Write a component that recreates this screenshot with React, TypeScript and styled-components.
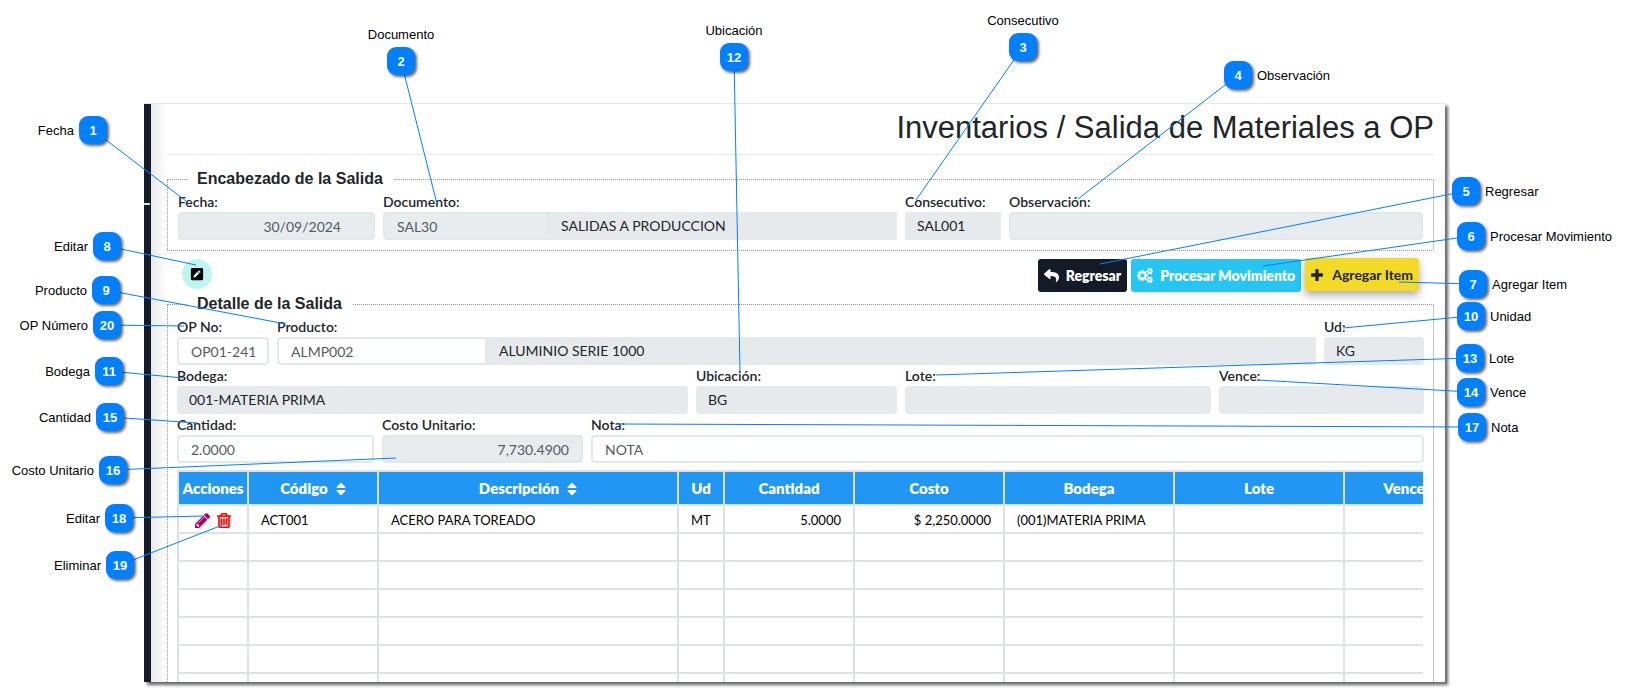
import React from "react";
import styled, { createGlobalStyle, css } from "styled-components";
import { FaPenSquare, FaReply, FaSort } from "react-icons/fa";

const GlobalStyle = createGlobalStyle`
  *, *::before, *::after { box-sizing: border-box; }
  body {
    margin: 0;
    background: #fff;
    color: #212529;
    font-family: Lato, "Liberation Sans", sans-serif;
    font-size: 14px;
  }
  button, input { font: inherit; }
`;

const Figure = styled.main`
  position: relative;
  height: 100vh;
  overflow: hidden;
  display: flex;
  padding: 103px 182px 9px 144px;
`;

const Screen = styled.section`
  flex: 1;
  min-width: 0;
  display: flex;
  overflow: hidden;
  border-top: 1px solid #e6e9ea;
  background: #fff;
  box-shadow: 3px 3px 3px rgba(0, 0, 0, 0.6);
`;

const Sidebar = styled.div`
  flex: none;
  width: 7px;
  padding-top: 99px;
  background: #141b29;
`;

const SidebarMark = styled.div`
  height: 2px;
  width: 6px;
  background: #dfe3e8;
`;

const Content = styled.div`
  flex: 1;
  min-width: 0;
  padding: 0 11px 0 16px;
  background: linear-gradient(to right, #e9e9e9, #fff 16px);
`;

const Title = styled.h1`
  margin: 0 0 24px;
  height: 51px;
  padding-top: 7px;
  border-bottom: 1px solid #e6eaec;
  font: 400 31px/34px "Liberation Sans", Arial, sans-serif;
  text-align: right;
  white-space: nowrap;
`;

const Group = styled.fieldset<{ $tall?: boolean }>`
  min-width: 0;
  margin: 0;
  border: 0;
  padding: 0;
  height: ${(p) => (p.$tall ? "480px" : "auto")};
`;

const GroupHead = styled.legend`
  display: flex;
  align-items: center;
  width: 100%;
  height: 0;
  padding: 0;
  font: 700 16px/18px "Liberation Sans", Arial, sans-serif;
  white-space: nowrap;

  &::before {
    content: "";
    width: 20px;
    border-top: 1px dotted #999;
  }
  &::after {
    content: "";
    flex: 1;
    border-top: 1px dotted #999;
  }
`;

const GroupTitle = styled.span`
  padding: 0 11px 0 10px;
`;

const GroupBody = styled.div<{ $inset: number; $tall?: boolean }>`
  padding: 13px ${(p) => p.$inset}px 9px;
  height: ${(p) => (p.$tall ? "100%" : "auto")};
  border: 1px dotted #999;
  border-top: 0;
  border-right: 1px solid #c4c6c8;
`;

const Row = styled.div<{ $cols: string }>`
  display: grid;
  grid-template-columns: ${(p) => p.$cols};
  gap: 8px;
  margin-bottom: 1px;
`;

const Field = styled.div`
  min-width: 0;
  display: flex;
  flex-direction: column;
`;

const Caption = styled.label`
  height: 20px;
  font-size: 14px;
  line-height: 20px;
  font-weight: 600;
  color: #212529;
  white-space: nowrap;
`;

const Pair = styled.div<{ $cols: string }>`
  display: grid;
  grid-template-columns: ${(p) => p.$cols};
`;

const control = css`
  width: 100%;
  min-width: 0;
  height: 28px;
  margin: 0;
  font-size: 14px;
  line-height: 20px;
`;

const TextBox = styled.input<{ $right?: number; $joined?: boolean }>`
  ${control}
  padding: 0 ${(p) => p.$right ?? 12}px 0 12px;
  border: 2px solid #e3e8e8;
  border-radius: ${(p) => (p.$joined ? "4px 0 0 4px" : "4px")};
  background: #fff;
  color: #545b62;
  text-align: ${(p) => (p.$right ? "right" : "left")};

  &:read-only { background: #e8ecef; }
`;

const ReadOut = styled.output<{ $square?: boolean }>`
  ${control}
  display: block;
  padding: 4px 12px;
  border-radius: ${(p) => (p.$square ? "0" : "4px")};
  background: #e7eaed;
  color: #212529;
  white-space: nowrap;
`;

const ActionBar = styled.div`
  display: flex;
  gap: 4px;
  height: 53px;
  padding: 8px 15px 0;
`;

const RoundButton = styled.button`
  display: grid;
  place-items: center;
  width: 30px;
  height: 30px;
  margin-right: auto;
  padding: 0;
  border: 0;
  border-radius: 50%;
  background: #bdf5f1;
  color: #000;
`;

const Button = styled.button<{ $bg: string; $fg: string; $raised?: boolean; $heavy?: boolean }>`
  display: flex;
  align-items: center;
  gap: ${(p) => (p.$raised ? 9 : 7)}px;
  height: 33px;
  padding: 0 6px;
  border: 0;
  border-radius: 3px;
  background: ${(p) => p.$bg};
  color: ${(p) => p.$fg};
  font-size: 14px;
  line-height: 20px;
  font-weight: ${(p) => (p.$heavy ? 800 : 700)};
  white-space: nowrap;
  ${(p) =>
    p.$raised &&
    css`
      margin-top: -1px;
      box-shadow: 0 4px 8px rgba(0, 0, 0, 0.35);
    `}
`;

const TableScroll = styled.div`
  margin: 7px 1px 0 0;
  overflow: hidden;
`;

const Table = styled.table`
  width: 1288px;
  table-layout: fixed;
  border-collapse: collapse;
  color: #000;
`;

const HeadCell = styled.th<{ $w: number }>`
  width: ${(p) => p.$w}px;
  height: 34px;
  padding: 0;
  border: 2px solid #dee2e6;
  background: #2196f3;
  color: #fff;
  font-size: 15px;
  line-height: 20px;
  font-weight: 800;
  white-space: nowrap;

  svg {
    width: 10px;
    height: 16px;
    margin-left: 8px;
    vertical-align: -3px;
  }
`;

const Cell = styled.td<{ $align?: string }>`
  height: 28px;
  padding: 2px 12px 0;
  border: 2px solid #dee2e6;
  font-size: 13px;
  line-height: 20px;
  text-align: ${(p) => p.$align ?? "left"};
  white-space: nowrap;
`;

const RowActions = styled.div`
  display: flex;
  justify-content: center;
  align-items: center;
  gap: 7px;
`;

const IconButton = styled.button<{ $color: string }>`
  display: flex;
  padding: 0;
  border: 0;
  background: none;
  color: ${(p) => p.$color};
`;

const Leaders = styled.svg`
  position: absolute;
  inset: 0;
  width: 100%;
  height: 100%;
  pointer-events: none;
`;

const Pin = styled.div<{ $x: number; $y: number }>`
  position: absolute;
  left: ${(p) => p.$x}px;
  top: ${(p) => p.$y}px;
  display: grid;
  place-items: center;
  width: 28px;
  height: 28px;
  padding-top: 1px;
  border-radius: 9px;
  background: #0080ff;
  box-shadow: 2px 2px 3px rgba(0, 0, 0, 0.6);
  color: #fff;
  font: 700 13px/15px "Liberation Sans", Arial, sans-serif;
`;

const places = {
  left: css`right: 33px; top: 7px;`,
  right: css`left: 33px; top: 7px;`,
  top: css`left: 50%; bottom: 33px; transform: translateX(-50%);`,
};

const PinLabel = styled.span<{ $place: keyof typeof places }>`
  position: absolute;
  ${(p) => places[p.$place]}
  color: #000;
  font-size: 13px;
  line-height: 15px;
  font-weight: 400;
  white-space: nowrap;
`;

const CogsIcon = () => (
  <svg width="16" height="15" viewBox="0 0 1920 1792" fill="currentColor" stroke="currentColor" strokeWidth="40" aria-hidden="true">
    <path d="M896 896q0-106-75-181t-181-75-181 75-75 181 75 181 181 75 181-75 75-181zm768 512q0-52-38-90t-90-38-90 38-38 90q0 53 37.5 90.5t90.5 37.5 90.5-37.5 37.5-90.5zm0-1024q0-52-38-90t-90-38-90 38-38 90q0 53 37.5 90.5t90.5 37.5 90.5-37.5 37.5-90.5zm-384 421v185q0 10-7 19.5t-16 10.5l-155 24q-11 35-32 76 34 48 90 115 7 11 7 20 0 12-7 19-23 30-82.5 89.5t-78.5 59.5q-11 0-21-7l-115-90q-37 19-77 31-11 108-23 155-7 24-30 24h-186q-11 0-20-7.5t-10-17.5l-23-153q-34-10-75-31l-118 89q-7 7-20 7-11 0-21-8-144-133-144-160 0-9 7-19 10-14 41-53t47-61q-23-44-35-82l-152-24q-10-1-17-9.5t-7-19.5v-185q0-10 7-19.5t16-10.5l155-24q11-35 32-76-34-48-90-115-7-11-7-20 0-12 7-20 22-30 82-89t79-59q11 0 21 7l115 90q34-18 77-32 11-108 23-154 7-24 30-24h186q11 0 20 7.5t10 17.5l23 153q34 10 75 31l118-89q8-7 20-7 11 0 21 8 144 133 144 160 0 8-7 19-12 16-42 54t-45 60q23 48 34 82l152 23q10 2 17 10.5t7 19.5zm640 533v140q0 16-149 31-12 27-30 52 51 113 51 138 0 4-4 7-122 71-124 71-8 0-46-47t-52-68q-20 2-30 2t-30-2q-14 21-52 68t-46 47q-2 0-124-71-4-3-4-7 0-25 51-138-18-25-30-52-149-15-149-31v-140q0-16 149-31 13-29 30-52-51-113-51-138 0-4 4-7 4-2 35-20t59-34 30-16q8 0 46 46.5t52 67.5q20-2 30-2t30 2q51-71 92-112l6-2q4 0 124 70 4 3 4 7 0 25-51 138 17 23 30 52 149 15 149 31zm0-1024v140q0 16-149 31-12 27-30 52 51 113 51 138 0 4-4 7-122 71-124 71-8 0-46-47t-52-68q-20 2-30 2t-30-2q-14 21-52 68t-46 47q-2 0-124-71-4-3-4-7 0-25 51-138-18-25-30-52-149-15-149-31v-140q0-16 149-31 13-29 30-52-51-113-51-138 0-4 4-7 4-2 35-20t59-34 30-16q8 0 46 46.5t52 67.5q20-2 30-2t30 2q51-71 92-112l6-2q4 0 124 70 4 3 4 7 0 25-51 138 17 23 30 52 149 15 149 31z" />
  </svg>
);

const PlusIcon = () => (
  <svg width="12" height="12" viewBox="192 128 1408 1408" fill="currentColor" aria-hidden="true">
    <path d="M1600 736v192q0 40-28 68t-68 28h-416v416q0 40-28 68t-68 28h-192q-40 0-68-28t-28-68v-416h-416q-40 0-68-28t-28-68v-192q0-40 28-68t68-28h416v-416q0-40 28-68t68-28h192q40 0 68 28t28 68v416h416q40 0 68 28t28 68z" />
  </svg>
);

const PencilIcon = () => (
  <svg width="15" height="15" viewBox="128 148 1516 1516" fill="currentColor" aria-hidden="true">
    <path d="M491 1536l91-91-235-235-91 91v107h128v128h107zm523-928q0-22-22-22-10 0-17 7l-542 542q-7 7-7 17 0 22 22 22 10 0 17-7l542-542q7-7 7-17zm-54-192l416 416-832 832h-416v-416zm683 96q0 53-37 90l-166 166-416-416 166-165q36-38 90-38 53 0 91 38l235 234q37 39 37 91z" />
  </svg>
);

const TrashIcon = () => (
  <svg width="14" height="15" viewBox="192 128 1408 1536" fill="currentColor" stroke="currentColor" strokeWidth="60" aria-hidden="true">
    <path d="M704 736v576q0 14-9 23t-23 9h-64q-14 0-23-9t-9-23v-576q0-14 9-23t23-9h64q14 0 23 9t9 23zm256 0v576q0 14-9 23t-23 9h-64q-14 0-23-9t-9-23v-576q0-14 9-23t23-9h64q14 0 23 9t9 23zm256 0v576q0 14-9 23t-23 9h-64q-14 0-23-9t-9-23v-576q0-14 9-23t23-9h64q14 0 23 9t9 23zm128 724v-948h-896v948q0 22 7 40.5t14.5 27 10.5 8.5h832q3 0 10.5-8.5t14.5-27 7-40.5zm-672-1076h448l-48-117q-7-9-17-11h-317q-10 2-17 11zm928 32v64q0 14-9 23t-23 9h-96v948q0 83-47 143.5t-113 60.5h-832q-66 0-113-58.5t-47-141.5v-952h-96q-14 0-23-9t-9-23v-64q0-14 9-23t23-9h309l70-167q15-37 54-63t79-26h320q40 0 79 26t54 63l70 167h309q14 0 23 9t9 23z" />
  </svg>
);

type Note = { n: number; text: string; place: keyof typeof places; x: number; y: number; to: [number, number] };

const notes: Note[] = [
  { n: 1, text: "Fecha", place: "left", x: 79, y: 116, to: [186, 201] },
  { n: 2, text: "Documento", place: "top", x: 387, y: 47, to: [437, 204] },
  { n: 3, text: "Consecutivo", place: "top", x: 1009, y: 33, to: [916, 200] },
  { n: 4, text: "Observación", place: "right", x: 1224, y: 61, to: [1078, 199] },
  { n: 5, text: "Regresar", place: "right", x: 1452, y: 177, to: [1100, 264] },
  { n: 6, text: "Procesar Movimiento", place: "right", x: 1457, y: 222, to: [1263, 266] },
  { n: 7, text: "Agregar Item", place: "right", x: 1459, y: 270, to: [1399, 282] },
  { n: 8, text: "Editar", place: "left", x: 93, y: 232, to: [196, 265] },
  { n: 9, text: "Producto", place: "left", x: 92, y: 276, to: [286, 324] },
  { n: 10, text: "Unidad", place: "right", x: 1457, y: 302, to: [1343, 328] },
  { n: 11, text: "Bodega", place: "left", x: 95, y: 357, to: [183, 378] },
  { n: 12, text: "Ubicación", place: "top", x: 720, y: 43, to: [740, 372] },
  { n: 13, text: "Lote", place: "right", x: 1456, y: 344, to: [936, 375] },
  { n: 14, text: "Vence", place: "right", x: 1457, y: 378, to: [1257, 380] },
  { n: 15, text: "Cantidad", place: "left", x: 96, y: 403, to: [197, 423] },
  { n: 16, text: "Costo Unitario", place: "left", x: 99, y: 456, to: [396, 458] },
  { n: 17, text: "Nota", place: "right", x: 1458, y: 413, to: [617, 424] },
  { n: 18, text: "Editar", place: "left", x: 105, y: 504, to: [204, 516] },
  { n: 19, text: "Eliminar", place: "left", x: 106, y: 551, to: [225, 524] },
  { n: 20, text: "OP Número", place: "left", x: 93, y: 311, to: [184, 326] },
];

const columns = [
  { title: "Acciones", w: 70 },
  { title: "Código", w: 130, sort: true },
  { title: "Descripción", w: 300, sort: true },
  { title: "Ud", w: 46 },
  { title: "Cantidad", w: 130 },
  { title: "Costo", w: 150 },
  { title: "Bodega", w: 170 },
  { title: "Lote", w: 170 },
  { title: "Vence", w: 120 },
];

const emptyRows = [1, 2, 3, 4, 5, 6];

export default function App() {
  return (
    <>
      <GlobalStyle />
      <Figure>
        <Screen>
          <Sidebar>
            <SidebarMark />
          </Sidebar>
          <Content>
            <Title>Inventarios / Salida de Materiales a OP</Title>

            <Group>
              <GroupHead>
                <GroupTitle>Encabezado de la Salida</GroupTitle>
              </GroupHead>
              <GroupBody $inset={10}>
                <Row $cols="197fr 514fr 96fr 414fr">
                  <Field>
                    <Caption htmlFor="fecha">Fecha:</Caption>
                    <TextBox id="fecha" readOnly $right={32} defaultValue="30/09/2024" />
                  </Field>
                  <Field>
                    <Caption htmlFor="documento">Documento:</Caption>
                    <Pair $cols="166fr 348fr">
                      <TextBox id="documento" readOnly $joined defaultValue="SAL30" />
                      <ReadOut $square>SALIDAS A PRODUCCION</ReadOut>
                    </Pair>
                  </Field>
                  <Field>
                    <Caption htmlFor="consecutivo">Consecutivo:</Caption>
                    <ReadOut id="consecutivo" $square>SAL001</ReadOut>
                  </Field>
                  <Field>
                    <Caption htmlFor="observacion">Observación:</Caption>
                    <TextBox id="observacion" readOnly />
                  </Field>
                </Row>
              </GroupBody>
            </Group>

            <ActionBar>
              <RoundButton type="button" aria-label="Editar">
                <FaPenSquare size={14} />
              </RoundButton>
              <Button type="button" $bg="#141b26" $fg="#fff" $heavy>
                <FaReply size={15} /> Regresar
              </Button>
              <Button type="button" $bg="#26c6f4" $fg="#fff" $heavy>
                <CogsIcon /> Procesar Movimiento
              </Button>
              <Button type="button" $bg="#f2da27" $fg="#212529" $raised>
                <PlusIcon /> Agregar Item
              </Button>
            </ActionBar>

            <Group $tall>
              <GroupHead>
                <GroupTitle>Detalle de la Salida</GroupTitle>
              </GroupHead>
              <GroupBody $inset={9} $tall>
                <Row $cols="92fr 1039fr 100fr">
                  <Field>
                    <Caption htmlFor="op">OP No:</Caption>
                    <TextBox id="op" defaultValue="OP01-241" />
                  </Field>
                  <Field>
                    <Caption htmlFor="producto">Producto:</Caption>
                    <Pair $cols="210fr 829fr">
                      <TextBox id="producto" $joined defaultValue="ALMP002" />
                      <ReadOut $square>ALUMINIO SERIE 1000</ReadOut>
                    </Pair>
                  </Field>
                  <Field>
                    <Caption htmlFor="ud">Ud:</Caption>
                    <ReadOut id="ud">KG</ReadOut>
                  </Field>
                </Row>
                <Row $cols="511fr 201fr 306fr 205fr">
                  <Field>
                    <Caption htmlFor="bodega">Bodega:</Caption>
                    <ReadOut id="bodega">001-MATERIA PRIMA</ReadOut>
                  </Field>
                  <Field>
                    <Caption htmlFor="ubicacion">Ubicación:</Caption>
                    <ReadOut id="ubicacion">BG</ReadOut>
                  </Field>
                  <Field>
                    <Caption htmlFor="lote">Lote:</Caption>
                    <ReadOut id="lote" />
                  </Field>
                  <Field>
                    <Caption htmlFor="vence">Vence:</Caption>
                    <ReadOut id="vence" />
                  </Field>
                </Row>
                <Row $cols="197fr 201fr 833fr">
                  <Field>
                    <Caption htmlFor="cantidad">Cantidad:</Caption>
                    <TextBox id="cantidad" defaultValue="2.0000" />
                  </Field>
                  <Field>
                    <Caption htmlFor="costo">Costo Unitario:</Caption>
                    <TextBox id="costo" readOnly $right={12} defaultValue="7,730.4900" />
                  </Field>
                  <Field>
                    <Caption htmlFor="nota">Nota:</Caption>
                    <TextBox id="nota" defaultValue="NOTA" />
                  </Field>
                </Row>
                <TableScroll>
                  <Table>
                    <thead>
                      <tr>
                        {columns.map((c) => (
                          <HeadCell key={c.title} $w={c.w}>
                            {c.title}
                            {c.sort && <FaSort />}
                          </HeadCell>
                        ))}
                      </tr>
                    </thead>
                    <tbody>
                      <tr>
                        <Cell>
                          <RowActions>
                            <IconButton type="button" aria-label="Editar" $color="#b0006c">
                              <PencilIcon />
                            </IconButton>
                            <IconButton type="button" aria-label="Eliminar" $color="#f00">
                              <TrashIcon />
                            </IconButton>
                          </RowActions>
                        </Cell>
                        <Cell>ACT001</Cell>
                        <Cell>ACERO PARA TOREADO</Cell>
                        <Cell>MT</Cell>
                        <Cell $align="right">5.0000</Cell>
                        <Cell $align="right">$ 2,250.0000</Cell>
                        <Cell>(001)MATERIA PRIMA</Cell>
                        <Cell />
                        <Cell />
                      </tr>
                      {emptyRows.map((r) => (
                        <tr key={r}>
                          {columns.map((c) => (
                            <Cell key={c.title} />
                          ))}
                        </tr>
                      ))}
                    </tbody>
                  </Table>
                </TableScroll>
              </GroupBody>
            </Group>
          </Content>
        </Screen>

        <Leaders aria-hidden="true">
          {notes.map((a) => (
            <line key={a.n} x1={a.x + 14} y1={a.y + 14} x2={a.to[0]} y2={a.to[1]} stroke="#0080ff" />
          ))}
        </Leaders>
        {notes.map((a) => (
          <Pin key={a.n} $x={a.x} $y={a.y}>
            {a.n}
            <PinLabel $place={a.place}>{a.text}</PinLabel>
          </Pin>
        ))}
      </Figure>
    </>
  );
}
